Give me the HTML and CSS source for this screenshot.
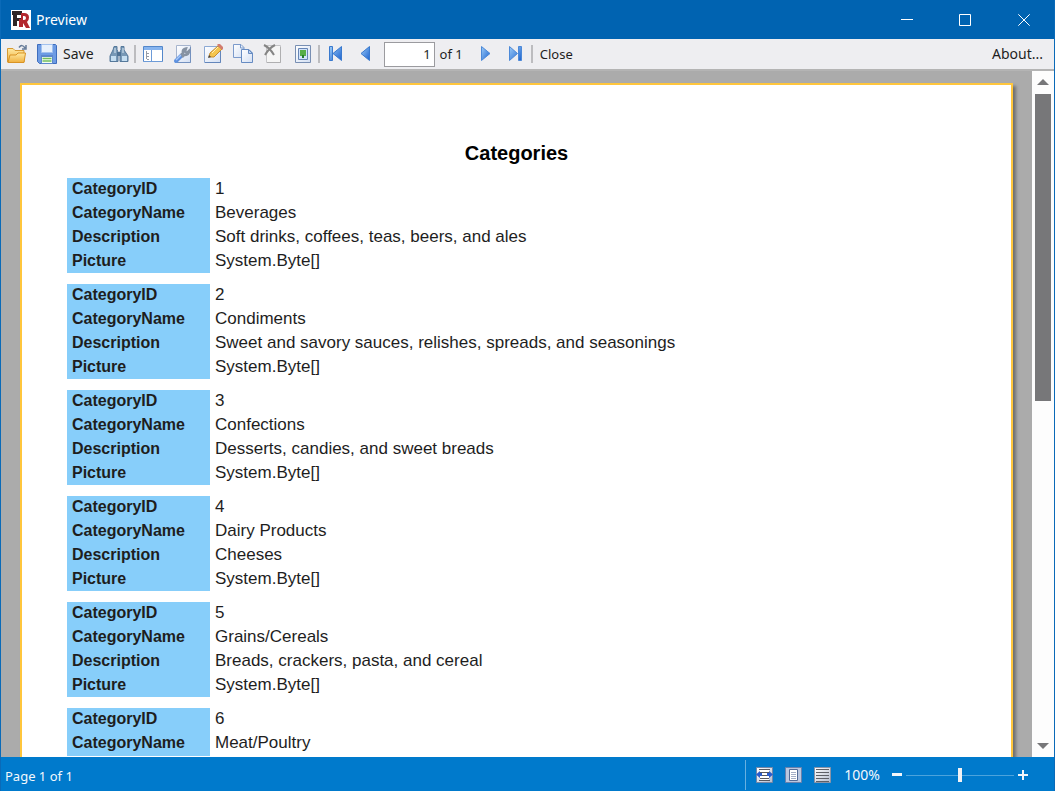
FILE: index.html
```html
<!DOCTYPE html>
<html lang="en">
<head>
<meta charset="utf-8">
<title>Preview</title>
<link rel="stylesheet" href="styles.css">
</head>
<body>
<svg class="defs" aria-hidden="true">
  <defs>
    <linearGradient id="blue" x1="0" y1="0" x2="1" y2="1"><stop offset="0" stop-color="#9cccf8"/><stop offset="1" stop-color="#1b62cf"/></linearGradient>
    <linearGradient id="sheet" x1="0" y1="0" x2="1" y2="1"><stop offset="0" stop-color="#ffffff"/><stop offset="1" stop-color="#d3dff3"/></linearGradient>
    <linearGradient id="gold" x1="0" y1="0" x2="0" y2="1"><stop offset="0" stop-color="#ffe9a0"/><stop offset="1" stop-color="#efb040"/></linearGradient>
    <linearGradient id="silver" x1="0" y1="0" x2="1" y2="1"><stop offset="0" stop-color="#ffffff"/><stop offset="1" stop-color="#b4bccd"/></linearGradient>
  </defs>
</svg>
<div class="window">
  <header class="titlebar">
    <svg class="logo" viewBox="0 0 20 20" aria-hidden="true">
      <path fill="#fff" d="M0 0h20v20H0z"/>
      <path fill="#2e2526" d="M1 1h10v4H6v3h4v3H6v5H2V5H1z"/>
      <path fill="#b3272d" fill-rule="evenodd" d="M10 3h3q5 0 5 4.500 0 3-2 4.500l3 6h-4l-3-5v4H8V9h2zm2 3v4h1q2 0 2-2t-2-2z"/>
    </svg>
    <h1 class="title">Preview</h1>
    <button class="caption" aria-label="Minimize"><svg viewBox="0 0 12 12"><path d="M0 5.500h12"/></svg></button>
    <button class="caption" aria-label="Maximize"><svg viewBox="0 0 12 12"><path d="M.5.5h11v11H.5z"/></svg></button>
    <button class="caption" aria-label="Close window"><svg viewBox="0 0 12 12"><path d="M.3.3l11.400 11.400M11.700.3.3 11.700"/></svg></button>
  </header>

  <div class="toolbar" role="toolbar" aria-label="Preview tools">
    <button class="tool" aria-label="Open"><svg viewBox="0 0 20 20">
      <path fill="url(#gold)" stroke="#d79a32" d="M.5 18V4.500H6L8 6.500h9V18z"/>
      <path fill="url(#gold)" stroke="#d99325" d="M1 18.500 3 11h6l2-2h7.500L17 18.500z"/>
      <path fill="none" stroke="#657b98" stroke-width="1.500" d="M12 3.500q3-4 6 .5M19 1v4h-4"/></svg></button>
    <button class="tool labelled"><svg viewBox="0 0 20 20">
      <path fill="#6d9be4" stroke="#3e6dbd" d="M.5.5h18l1 1v18h-17l-2-2z"/>
      <path fill="#e7f0fc" stroke="#a2c1ee" d="M4.500.5h11v8h-11z"/>
      <path fill="#5d87cc" d="M4 11h12v9H4z"/><path fill="#f3fff0" d="M5 13h10v6H5z"/>
      <path stroke="#74bd5d" stroke-width="1.500" d="M5.500 14.500h9M5.500 17h9"/></svg><span>Save</span></button>
    <button class="tool" aria-label="Find"><svg viewBox="0 0 20 20">
      <path fill="#7798b6" stroke="#56799b" d="M5 2.500h3v3L9 8v9.500H1V12L4 6zM12 2.500h3V6l4 6v5.500h-8V8l1-2.500z"/>
      <path fill="#4e7193" d="M8 8h4v4H8z"/>
      <path fill="#c5def1" d="M2 12h5v5H2zM13 12h5v5h-5z"/><path stroke="#dbeaf5" d="M6 4v5M14 4v5"/></svg></button>
    <span class="divider"></span>
    <button class="tool" aria-label="Outline"><svg viewBox="0 0 20 20">
      <path fill="#fff" stroke="#5387ca" d="M.5 2.500h19v15H.5z"/><path fill="#86b4ef" d="M1 3h18v3H1z"/>
      <path stroke="#6d9bd8" d="M8.500 6v11M19 17.500H1"/><path fill="none" stroke="#969ca7" d="M3.500 7v8M4 9.500h2M4 12.500h2M4 15.500h2"/></svg></button>
    <button class="tool" aria-label="Page setup"><svg viewBox="0 0 20 20">
      <path fill="url(#sheet)" stroke="#a6b4cd" d="M3.500 1.500h14v17h-14z"/><path fill="none" stroke="#7391bf" d="M17.500 3v15.500H4"/>
      <path stroke="#5e91df" stroke-width="4" stroke-linecap="round" d="M3 17l5-5"/>
      <path stroke="#a5c8fa" stroke-width="1.500" d="M3 16l5-5"/>
      <path fill="none" stroke="#8793a3" stroke-width="2.500" d="M8 11l2-2q-1-4 3-4.500l-1 3 2 1.500 2-2q0 4-5 4l-2 2"/></svg></button>
    <button class="tool" aria-label="Edit page"><svg viewBox="0 0 20 20">
      <path fill="url(#sheet)" stroke="#8ca9d4" d="M1.500 2.500h16v16h-16z"/><path fill="none" stroke="#6386bb" d="M17.500 5v13.500H2"/>
      <path fill="#f4c54e" stroke="#c78c2c" d="M6 13l1-4 8-7 4 3-8 8z"/><path fill="#d27d70" d="M15 0h2l3 3v2l-1 1-5-5z"/><path stroke="#fff0b8" d="M9 9l6-6"/><path fill="#424242" d="M6 11l2 2-3 1z"/></svg></button>
    <button class="tool" aria-label="Copy page"><svg viewBox="0 0 20 20">
      <path fill="url(#sheet)" stroke="#7b9acb" d="M.5.500H8l3 3v10H.5z"/><path fill="none" stroke="#7b9acb" d="M7.500.500V4H11"/>
      <path fill="url(#sheet)" stroke="#668bc2" d="M8.500 5.500H16l3.500 3.500v9.500h-11z"/><path fill="#bbd1f1" stroke="#668bc2" d="M15.500 5.500v4h4z"/></svg></button>
    <button class="tool" aria-label="Delete page"><svg viewBox="0 0 20 20">
      <path fill="#f5f5f5" stroke="#c5c5c8" d="M3.500 1.500h14v17h-14z"/><path fill="none" stroke="#afafb1" d="M17.500 3v15.500H4"/>
      <path fill="none" stroke="#858585" stroke-width="2" d="M1 1q6 3 10 10M12 1Q6 4 2 11"/></svg></button>
    <button class="tool" aria-label="Watermark"><svg viewBox="0 0 20 20">
      <path fill="url(#sheet)" stroke="#788fb3" d="M2.500 1.500h15v17h-15z"/><path fill="#d1e3fb" stroke="#6785b4" d="M5.500 4.500h9v11h-9z"/>
      <path fill="#56ae48" d="M7 6h6v6H7z"/><path fill="#267c30" d="M9 11h2v3H9z"/></svg></button>
    <span class="divider"></span>
    <button class="tool" aria-label="First page"><svg viewBox="0 0 20 20"><path fill="url(#blue)" stroke="#3979ce" d="M2.500 2.500h3v14h-3zM14.500 2.500v14L6 9.500z"/></svg></button>
    <button class="tool" aria-label="Previous page"><svg viewBox="0 0 20 20"><path fill="url(#blue)" stroke="#3979ce" d="M12.500 2.500v14L4 9.500z"/></svg></button>
    <input class="page-number" type="text" value="1" aria-label="Page number">
    <span class="page-total">of 1</span>
    <button class="tool" aria-label="Next page"><svg viewBox="0 0 20 20"><path fill="url(#blue)" stroke="#4c89d8" d="M5.500 2.500v14L14 9.500z"/></svg></button>
    <button class="tool" aria-label="Last page"><svg viewBox="0 0 20 20"><path fill="url(#blue)" stroke="#4c89d8" d="M3.500 2.500v14l8-7zM12.500 2.500h3v14h-3z"/></svg></button>
    <span class="divider"></span>
    <button class="tool text">Close</button>
    <button class="tool text about">About...</button>
  </div>

  <div class="workspace">
    <main class="viewport">
      <article class="sheet">
        <h2 class="report-title">Categories</h2>
        <table class="record">
          <tr><th scope="row">CategoryID</th><td>1</td></tr>
          <tr><th scope="row">CategoryName</th><td>Beverages</td></tr>
          <tr><th scope="row">Description</th><td>Soft drinks, coffees, teas, beers, and ales</td></tr>
          <tr><th scope="row">Picture</th><td>System.Byte[]</td></tr>
        </table>
        <table class="record">
          <tr><th scope="row">CategoryID</th><td>2</td></tr>
          <tr><th scope="row">CategoryName</th><td>Condiments</td></tr>
          <tr><th scope="row">Description</th><td>Sweet and savory sauces, relishes, spreads, and seasonings</td></tr>
          <tr><th scope="row">Picture</th><td>System.Byte[]</td></tr>
        </table>
        <table class="record">
          <tr><th scope="row">CategoryID</th><td>3</td></tr>
          <tr><th scope="row">CategoryName</th><td>Confections</td></tr>
          <tr><th scope="row">Description</th><td>Desserts, candies, and sweet breads</td></tr>
          <tr><th scope="row">Picture</th><td>System.Byte[]</td></tr>
        </table>
        <table class="record">
          <tr><th scope="row">CategoryID</th><td>4</td></tr>
          <tr><th scope="row">CategoryName</th><td>Dairy Products</td></tr>
          <tr><th scope="row">Description</th><td>Cheeses</td></tr>
          <tr><th scope="row">Picture</th><td>System.Byte[]</td></tr>
        </table>
        <table class="record">
          <tr><th scope="row">CategoryID</th><td>5</td></tr>
          <tr><th scope="row">CategoryName</th><td>Grains/Cereals</td></tr>
          <tr><th scope="row">Description</th><td>Breads, crackers, pasta, and cereal</td></tr>
          <tr><th scope="row">Picture</th><td>System.Byte[]</td></tr>
        </table>
        <table class="record">
          <tr><th scope="row">CategoryID</th><td>6</td></tr>
          <tr><th scope="row">CategoryName</th><td>Meat/Poultry</td></tr>
        </table>
      </article>
    </main>
    <div class="scrollbar">
      <button class="arrow" aria-label="Scroll up"><svg viewBox="0 0 12 6"><path d="M0 6l6-6 6 6z"/></svg></button>
      <div class="track"><div class="thumb"></div></div>
      <button class="arrow" aria-label="Scroll down"><svg viewBox="0 0 12 6"><path d="M0 0l6 6 6-6z"/></svg></button>
    </div>
  </div>

  <footer class="statusbar">
    <span class="status-text">Page 1 of 1</span>
    <div class="zoom-panel">
      <button class="view" aria-label="Page width"><svg viewBox="0 0 17 16">
        <path fill="url(#silver)" stroke="#7686a5" d="M.5.5h16v15H.5z"/><path fill="#fff" d="M4 2h9v12H4z"/>
        <path stroke="#57585f" d="M3 2.500h11M4 5.500h9M5 8.500h7M4 11.500h9M3 13.500h11"/><path fill="#2b5dcd" d="M0 7.500 4 4v2h2v3H4v2zM17 7.500 13 4v2h-2v3h2v2z"/></svg></button>
      <button class="view" aria-label="Whole page"><svg viewBox="0 0 17 16">
        <path fill="#bac7df" stroke="#6981ad" d="M.5.5h16v15H.5z"/><path fill="#fff" stroke="#536b96" d="M4.500 2.500h8v11h-8z"/>
        <path stroke="#a3aec5" d="M6 5.500h5M6 7.500h5M6 9.500h5M6 11.500h5"/></svg></button>
      <button class="view" aria-label="Actual size"><svg viewBox="0 0 17 16">
        <path fill="url(#silver)" stroke="#8993a7" d="M.5.5h16v15H.5z"/><path stroke="#5e6067" d="M2 2.500h13M2 5.500h13M2 8.500h13M2 11.500h13M2 14.500h13"/></svg></button>
      <label class="zoom-label" for="zoom">100%</label>
      <button class="step" aria-label="Zoom out"><svg viewBox="0 0 10 10"><path d="M0 3h10v3H0z"/></svg></button>
      <input class="zoom" id="zoom" type="range" min="0" max="100" value="50">
      <button class="step" aria-label="Zoom in"><svg viewBox="0 0 10 10"><path d="M0 4h4V0h2v4h4v2H6v4H4V6H0z"/></svg></button>
    </div>
  </footer>
</div>
</body>
</html>
```
FILE: styles.css
```css
* { box-sizing: border-box; }
body { margin: 0; font: 13px/20px "Noto Sans", "Open Sans", sans-serif; color: #1e1e1e; }
button { margin: 0; padding: 0; border: 0; background: none; font: inherit; color: inherit; }
svg { display: block; }
.defs { position: absolute; width: 0; height: 0; }

.window { display: flex; flex-direction: column; height: 100vh; border: solid #0a6ab8; border-width: 0 1px; overflow: hidden; }

.titlebar { display: flex; flex: none; align-items: center; height: 39px; padding-left: 10px; background: #0063b1; color: #fff; }
.logo { width: 20px; height: 20px; }
.title { flex: 1; margin: 0 0 0 5px; font-size: 14px; font-weight: 400; }
.caption { display: grid; place-items: center; width: 58px; height: 39px; }
.caption:last-child { width: 60px; }
.caption svg { width: 12px; height: 12px; fill: none; stroke: #fff; }

.toolbar { display: flex; flex: none; align-items: center; height: 32px; padding: 0 11px 0 6px; background: #eeeef1; border-bottom: 2px solid #b4b4b4; }
.tool { flex: none; margin-right: 10px; }
.tool:has(+ .divider) { margin-right: 5px; }
.tool svg { width: 20px; height: 20px; }
.labelled { display: flex; gap: 6px; margin-right: 15px; font-size: 14px; }
.divider { flex: none; width: 2px; height: 18px; margin-right: 7px; background: #bcbcbf; }
.page-number { width: 51px; height: 25px; margin: 0 5px 0 -3px; padding: 0 3px; border: 1px solid #9b9b9f; background: #fff; font: inherit; color: inherit; text-align: right; }
.page-total { margin-right: 13px; }
.text { margin-right: 0; }
.about { margin-left: auto; font-size: 14px; }

.workspace { display: flex; flex: 1; min-height: 0; }
.viewport { flex: 1; min-width: 0; overflow: hidden; padding: 12px 19px 0 19px; background: #ababab; }
.sheet { min-height: 1400px; padding: 53px 45px; background: #fff; border: 2px solid #ffc63c; box-shadow: 3px 3px 3px #707070; font-family: "Liberation Sans", Arial, sans-serif; }
.report-title { margin: 0 0 10px; font-size: 20px; line-height: 30px; text-align: center; color: #000; }
.record { width: 100%; margin-bottom: 11px; border-collapse: collapse; line-height: 22px; }
.record th { width: 143px; padding: 0 5px 2px; background: #87cefa; font-size: 16px; font-weight: 700; text-align: left; }
.record td { padding: 0 5px 2px; font-size: 17px; }
.record tr:nth-child(4) > * { padding-bottom: 1px; }

.scrollbar { display: flex; flex: none; flex-direction: column; width: 22px; background: #fdfdfd; }
.arrow { display: grid; place-items: center; height: 22px; }
.arrow svg { width: 12px; height: 6px; fill: #777779; }
.track { flex: 1; padding: 1px 3px; }
.thumb { height: 48%; background: #777779; }

.statusbar { display: flex; flex: none; align-items: center; justify-content: space-between; height: 34px; padding-top: 2px; background: #007acc; color: #f2f8fc; }
.status-text { padding: 2px 0 0 4px; }
.zoom-panel { display: flex; align-items: center; height: 30px; padding: 0 26px 0 10px; border-left: 1px solid #68b0e0; }
.view { margin-right: 12px; }
.view svg { width: 17px; height: 16px; }
.zoom-label { margin: 0 12px 0 1px; font-size: 14px; }
.step svg { width: 10px; height: 10px; fill: #f2f6fa; }
.zoom { width: 108px; height: 20px; margin: 0 4px; background: none; appearance: none; -webkit-appearance: none; }
.zoom::-webkit-slider-runnable-track { height: 1px; background: #4ca3dc; }
.zoom::-webkit-slider-thumb { width: 4px; height: 14px; margin-top: -7px; background: #f2f2f4; appearance: none; -webkit-appearance: none; }
```
